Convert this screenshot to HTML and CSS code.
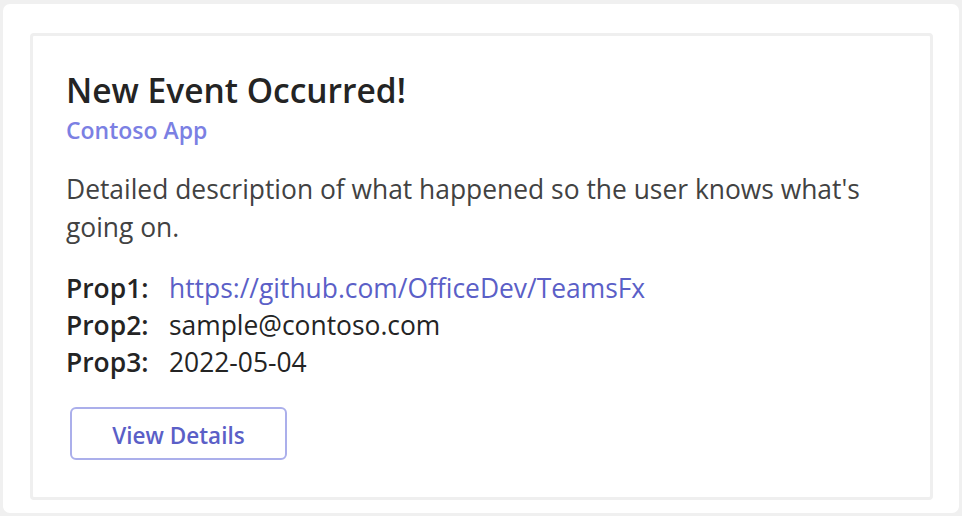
FILE: index.html
```html
<!DOCTYPE html>
<html>
<head>
<meta charset="utf-8">
<link rel="stylesheet" href="styles.css">
</head>
<body>
<div class="outer">
  <div class="card">
    <div class="title">New Event Occurred!</div>
    <div class="subtitle">Contoso App</div>
    <div class="desc">Detailed description of what happened so the user knows what's going on.</div>
    <div class="facts">
      <div class="label">Prop1:</div><div class="value link">https://github.com/OfficeDev/TeamsFx</div>
      <div class="label">Prop2:</div><div class="value">sample@contoso.com</div>
      <div class="label">Prop3:</div><div class="value">2022-05-04</div>
    </div>
    <div class="actions"><button class="btn">View Details</button></div>
  </div>
</div>
</body>
</html>
```
FILE: styles.css
```css
html, body { margin: 0; padding: 0; }
body {
  background: #f0f0f0;
  width: 962px;
  height: 516px;
  padding: 4px 3px 3px 3px;
  box-sizing: border-box;
  font-family: "Open Sans", "Noto Sans", sans-serif;
}
.outer {
  background: #ffffff;
  border-radius: 7px;
  height: 509px;
  width: 956px;
  padding: 29px 0 0 27px;
  box-sizing: border-box;
}
.card {
  width: 903px;
  height: 467px;
  box-sizing: border-box;
  border: 3px solid #efefef;
  border-radius: 4px;
  padding: 34px 40px 0 33px;
}
.title {
  font-size: 33.5px;
  font-weight: 600;
  color: #242424;
  line-height: 40px;
}
.subtitle {
  font-size: 23px;
  font-weight: 600;
  color: #7b80e3;
  line-height: 30px;
  margin-top: 5px;
}
.desc {
  font-size: 26.4px;
  color: #424242;
  line-height: 38px;
  margin-top: 25px;
}
.facts {
  display: grid;
  grid-template-columns: 103px 1fr;
  margin-top: 24px;
  font-size: 26.4px;
  line-height: 37px;
  color: #242424;
}
.label { font-weight: 600; }
.link { color: #5b5fc7; }
.actions { margin-top: 26px; padding-left: 4px; }
.btn {
  width: 217px;
  height: 53px;
  background: #ffffff;
  border: 2px solid #abafeb;
  border-radius: 6px;
  color: #5b5fc7;
  font-family: inherit;
  font-size: 22.5px;
  font-weight: 600;
  cursor: pointer;
  padding: 3px 0 0 0;
}
```
